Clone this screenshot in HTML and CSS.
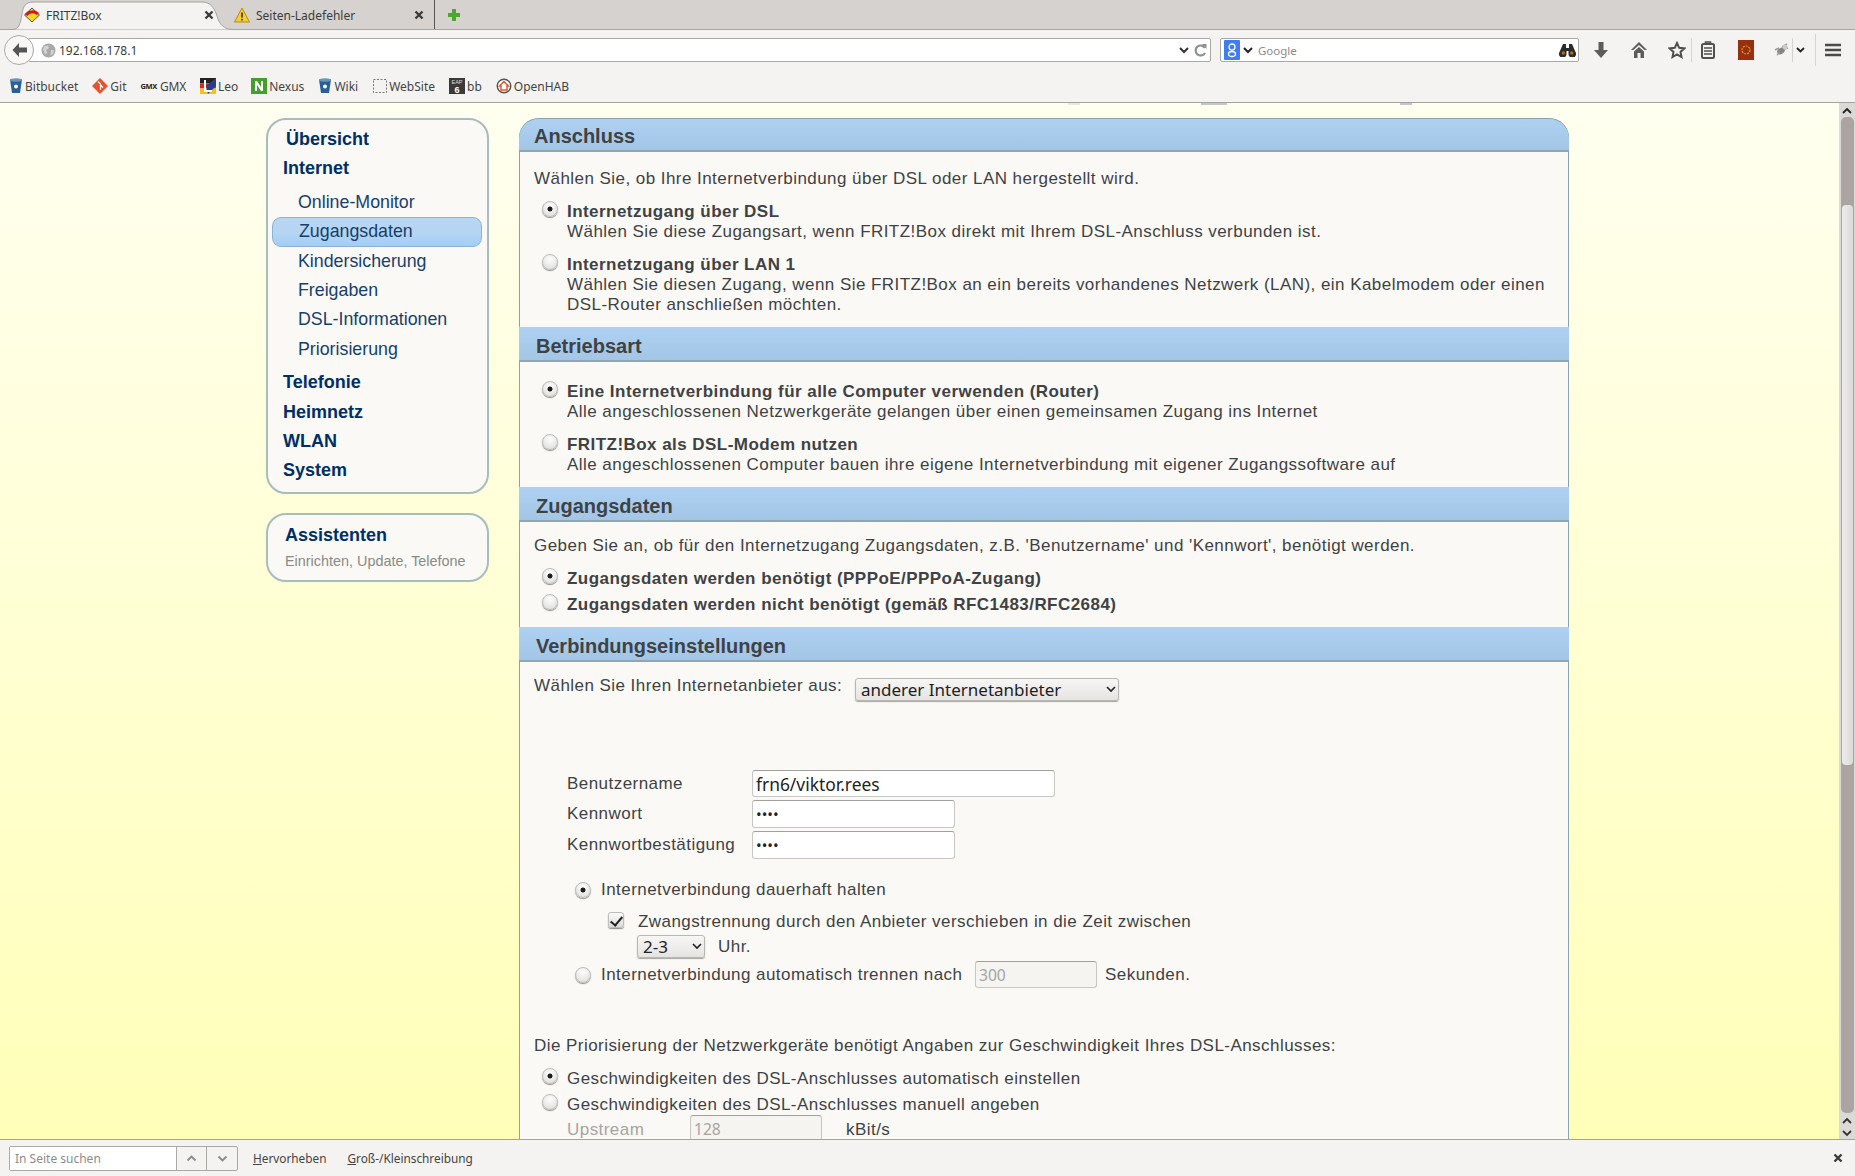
FILE: index.html
```html
<!DOCTYPE html>
<html lang="de">
<head>
    <meta charset="UTF-8">
    <title>FRITZ!Box</title>
    <link rel="stylesheet" href="styles.css">
</head>
<body>
    <header class="browser">
        <div class="tabstrip">
            <div class="tab tab-active">
                <svg class="tab-shape" width="221" height="30" viewBox="0 0 221 30"><path d="M0 29.5C7 29.5 8 25 10 14 11 6 14 2 21 2H190C198 2 202 7 205 16 207 24 212 29.5 221 29.5" fill="#f4f3f1" stroke="#a5a5a1"/></svg>
                <svg class="tab-icon" width="16" height="16" viewBox="0 0 16 16"><path d="M8 1 15.5 8 8 15 .5 8Z" fill="#f8d81e" stroke="#333" stroke-width=".8"/><path d="M2 8C5 4 11 4 14 7" fill="none" stroke="#d8141c" stroke-width="3"/></svg>
                <span class="tab-title">FRITZ!Box</span>
                <svg class="tab-close" width="10" height="10" viewBox="0 0 10 10"><path d="M1.5 1.5 8.5 8.5M8.5 1.5 1.5 8.5" stroke="#3b3b3b" stroke-width="2.4"/></svg>
            </div>
            <div class="tab tab-other">
                <svg class="tab-icon" width="16" height="16" viewBox="0 0 16 16"><path d="M8 1 15.5 15H.5Z" fill="#f6cf2e" stroke="#b88c10"/><path d="M8 5.5V10.5M8 11.8V13.4" stroke="#333" stroke-width="1.6"/></svg>
                <span class="tab-title">Seiten-Ladefehler</span>
                <svg class="tab-close" width="10" height="10" viewBox="0 0 10 10"><path d="M1.5 1.5 8.5 8.5M8.5 1.5 1.5 8.5" stroke="#3b3b3b" stroke-width="2.4"/></svg>
            </div>
            <svg class="new-tab" width="14" height="14" viewBox="0 0 14 14"><path d="M7 1V13M1 7H13" stroke="#4aa82c" stroke-width="4"/></svg>
        </div>

        <div class="navbar">
            <div class="back-button">
                <svg width="18" height="16" viewBox="0 0 18 16"><path d="M8 1 1.5 8 8 15V10.5H16V5.5H8Z" fill="#555"/></svg>
            </div>
            <div class="urlbar">
                <svg class="globe" width="15" height="15" viewBox="0 0 15 15"><circle cx="7.5" cy="7.5" r="7" fill="#a9a9a9"/><path d="M3 3.5 7 2.5 8 5 5 7 6.5 10 4.5 11.5 2 7ZM10 7 13 7 12 11 9.5 12.5Z" fill="#d4d4d4"/></svg>
                <span class="url-text">192.168.178.1</span>
                <svg class="chevron" width="10" height="7" viewBox="0 0 10 7"><path d="M1 1 5 5 9 1" fill="none" stroke="#333" stroke-width="2"/></svg>
                <svg class="reload" width="13" height="14" viewBox="0 0 13 14"><path d="M11 5A5 5 0 1 0 11 10" fill="none" stroke="#8b9197" stroke-width="2.2"/><path d="M8 1H12.5V6Z" fill="#8b9197"/></svg>
            </div>
            <div class="searchbar">
                <svg width="16" height="20" viewBox="0 0 16 20"><rect width="16" height="20" rx="1" fill="#3f7cf6"/><circle cx="8" cy="7" r="3" fill="none" stroke="#fff" stroke-width="1.3"/><ellipse cx="8" cy="14" rx="3.5" ry="2.5" fill="none" stroke="#fff" stroke-width="1.3"/></svg>
                <svg class="chevron" width="10" height="7" viewBox="0 0 10 7"><path d="M1 1 5 5 9 1" fill="none" stroke="#222" stroke-width="2"/></svg>
                <span class="search-text">Google</span>
                <svg class="binoculars" width="17" height="14" viewBox="0 0 17 14"><path d="M4 1H7V5H10V1H13L16.5 9A3.8 3.8 0 1 1 9.5 10.5V8H7.5V10.5A3.8 3.8 0 1 1 .5 9Z" fill="#2b2b2b"/><circle cx="4.3" cy="10" r="1.7" fill="#b5651d"/><circle cx="12.7" cy="10" r="1.7" fill="#b5651d"/></svg>
            </div>
            <div class="toolbar">
                <svg class="tool tool-download" width="16" height="18" viewBox="0 0 16 18"><path d="M5.5 1H10.5V9H15L8 17 1 9H5.5Z" fill="#5c5c5c"/></svg>
                <svg class="tool tool-home" width="18" height="18" viewBox="0 0 18 18"><path d="M9 1 17 9H14.5L9 4 3.5 9H1Z" fill="#5c5c5c"/><path d="M9 6 14 10.5V17H10.5V12H7.5V17H4V10.5Z" fill="#5c5c5c"/></svg>
                <svg class="tool tool-star" width="18" height="18" viewBox="0 0 18 18"><path d="M9 2 11.2 6.8 16.3 7.4 12.5 10.9 13.5 16 9 13.4 4.5 16 5.5 10.9 1.7 7.4 6.8 6.8Z" fill="none" stroke="#4f4f4f" stroke-width="2"/></svg>
                <span class="tool-divider"></span>
                <svg class="tool tool-clip" width="14" height="18" viewBox="0 0 14 18"><rect x="1" y="3" width="12" height="14" rx="1.5" fill="none" stroke="#4f4f4f" stroke-width="2"/><path d="M4.5 3V1H9.5V3M3 7H11M3 10H11M3 13H11" fill="none" stroke="#4f4f4f" stroke-width="1.5"/></svg>
                <svg class="tool tool-red" width="16" height="20" viewBox="0 0 16 20"><rect width="16" height="20" fill="#96300e"/><circle cx="8" cy="10" r="4" fill="none" stroke="#e39a2e" stroke-width="1.2" stroke-dasharray="2 1"/></svg>
                <svg class="tool tool-bug" width="16" height="16" viewBox="0 0 16 16"><ellipse cx="8" cy="9" rx="4" ry="3" fill="#555" opacity=".7" transform="rotate(-30 8 9)"/><path d="M9 5 14 2M11 7 15 6M2 8 6 6M4 13 7 10" stroke="#999" stroke-width="1.5"/><circle cx="12" cy="5" r="2.5" fill="#ccc"/></svg>
                <span class="tool-divider tool-divider-small"></span>
                <svg class="tool tool-more" width="9" height="6" viewBox="0 0 9 6"><path d="M1 1 4.5 4.5 8 1" fill="none" stroke="#222" stroke-width="1.8"/></svg>
                <span class="tool-divider tool-divider-tall"></span>
                <svg class="tool tool-menu" width="16" height="14" viewBox="0 0 16 14"><path d="M0 2H16M0 7H16M0 12H16" stroke="#4a4a4a" stroke-width="2.6"/></svg>
            </div>
        </div>

        <div class="bookmarks">
            <a class="bookmark bm-bitbucket"><svg width="14" height="16" viewBox="0 0 14 16"><path d="M1 1.5H13L11 15H3Z" fill="#2a5f96"/><ellipse cx="7" cy="2" rx="6" ry="1.8" fill="#6d93b8"/><circle cx="7" cy="8.5" r="2" fill="#fff"/></svg>Bitbucket</a>
            <a class="bookmark bm-git"><svg width="16" height="16" viewBox="0 0 16 16"><path d="M8 0 16 8 8 16 0 8Z" fill="#e9502f"/><path d="M6 3.5 8.5 6V12M8.5 7 11 9.5" fill="none" stroke="#fff" stroke-width="1.2"/></svg>Git</a>
            <a class="bookmark bm-gmx"><span class="gmx-logo">GMX</span>GMX</a>
            <a class="bookmark bm-leo"><svg width="16" height="16" viewBox="0 0 16 16"><rect width="16" height="5.5" fill="#222"/><rect y="5.5" width="16" height="5" fill="#d8282a"/><rect y="10.5" width="16" height="5.5" fill="#f1c21f"/><path d="M8 16 16 8V0L6 8Z" fill="#28408c"/><path d="M5 2V13H12" fill="none" stroke="#fff" stroke-width="2"/></svg>Leo</a>
            <a class="bookmark bm-nexus"><svg width="16" height="16" viewBox="0 0 16 16"><rect width="16" height="16" fill="#43a02b"/><path d="M4 13V3H6L10 9V3H12V13H10L6 7V13Z" fill="#fff"/></svg>Nexus</a>
            <a class="bookmark bm-wiki"><svg width="14" height="16" viewBox="0 0 14 16"><path d="M1 1.5H13L11 15H3Z" fill="#2a5f96"/><ellipse cx="7" cy="2" rx="6" ry="1.8" fill="#6d93b8"/><circle cx="7" cy="8.5" r="2" fill="#fff"/></svg>Wiki</a>
            <a class="bookmark bm-website"><svg width="14" height="14" viewBox="0 0 14 14"><rect x=".5" y=".5" width="13" height="13" fill="none" stroke="#777" stroke-dasharray="2 1.5"/></svg>WebSite</a>
            <a class="bookmark bm-bb"><svg width="16" height="16" viewBox="0 0 16 16"><rect width="16" height="16" fill="#3a3a3a"/><text x="8" y="6" font-size="5.5" fill="#ddd" text-anchor="middle" font-family="Liberation Sans">EAP</text><text x="8" y="15" font-size="9" font-weight="bold" fill="#fff" text-anchor="middle" font-family="Liberation Sans">6</text></svg>bb</a>
            <a class="bookmark bm-openhab"><svg width="16" height="16" viewBox="0 0 16 16"><circle cx="8" cy="8" r="6.8" fill="#fff" stroke="#555" stroke-width="1.4"/><path d="M8 3.5 12.5 8H11V12H5V8H3.5Z" fill="none" stroke="#e8552a" stroke-width="1.5"/></svg>OpenHAB</a>
        </div>
    </header>

    <div class="viewport">
        <div class="page">
            <span class="cut-mark cut-one"></span>
            <span class="cut-mark cut-two"></span>
            <span class="cut-mark cut-three"></span>

            <aside class="sidebar">
                <ul class="panel menu">
                    <li class="menu-overview">Übersicht</li>
                    <li class="menu-main menu-open">Internet</li>
                    <li class="menu-sub">Online-Monitor</li>
                    <li class="menu-sub menu-current">Zugangsdaten</li>
                    <li class="menu-sub">Kindersicherung</li>
                    <li class="menu-sub">Freigaben</li>
                    <li class="menu-sub">DSL-Informationen</li>
                    <li class="menu-sub menu-last">Priorisierung</li>
                    <li class="menu-main">Telefonie</li>
                    <li class="menu-main">Heimnetz</li>
                    <li class="menu-main">WLAN</li>
                    <li class="menu-main">System</li>
                </ul>
                <div class="panel wizard">
                    <div class="wizard-title">Assistenten</div>
                    <div class="wizard-text">Einrichten, Update, Telefone</div>
                </div>
            </aside>

            <main class="content">
                <h2 class="section-head section-first">Anschluss</h2>
                <section class="section section-anschluss">
                    <p class="text">Wählen Sie, ob Ihre Internetverbindung über DSL oder LAN hergestellt wird.</p>
                    <div class="choice choice-a">
                        <input type="radio" name="anschluss" checked>
                        <div><strong>Internetzugang über DSL</strong><br>Wählen Sie diese Zugangsart, wenn FRITZ!Box direkt mit Ihrem DSL-Anschluss verbunden ist.</div>
                    </div>
                    <div class="choice choice-a">
                        <input type="radio" name="anschluss">
                        <div><strong>Internetzugang über LAN 1</strong><br>Wählen Sie diesen Zugang, wenn Sie FRITZ!Box an ein bereits vorhandenes Netzwerk (LAN), ein Kabelmodem oder einen<br>DSL-Router anschließen möchten.</div>
                    </div>
                </section>

                <h2 class="section-head">Betriebsart</h2>
                <section class="section section-betrieb">
                    <div class="choice">
                        <input type="radio" name="betrieb" checked>
                        <div><strong>Eine Internetverbindung für alle Computer verwenden (Router)</strong><br>Alle angeschlossenen Netzwerkgeräte gelangen über einen gemeinsamen Zugang ins Internet</div>
                    </div>
                    <div class="choice choice-a">
                        <input type="radio" name="betrieb">
                        <div><strong>FRITZ!Box als DSL-Modem nutzen</strong><br>Alle angeschlossenen Computer bauen ihre eigene Internetverbindung mit eigener Zugangssoftware auf</div>
                    </div>
                </section>

                <h2 class="section-head">Zugangsdaten</h2>
                <section class="section section-zugang">
                    <p class="text">Geben Sie an, ob für den Internetzugang Zugangsdaten, z.B. 'Benutzername' und 'Kennwort', benötigt werden.</p>
                    <div class="choice choice-a">
                        <input type="radio" name="zugang" checked>
                        <strong>Zugangsdaten werden benötigt (PPPoE/PPPoA-Zugang)</strong>
                    </div>
                    <div class="choice choice-c">
                        <input type="radio" name="zugang">
                        <strong>Zugangsdaten werden nicht benötigt (gemäß RFC1483/RFC2684)</strong>
                    </div>
                </section>

                <h2 class="section-head">Verbindungseinstellungen</h2>
                <section class="section section-verbindung">
                    <div class="provider">
                        <span class="provider-label">Wählen Sie Ihren Internetanbieter aus:</span>
                        <select class="select select-provider"><option>anderer Internetanbieter</option></select>
                    </div>

                    <div class="login">
                        <label>Benutzername</label>
                        <input class="field field-long" type="text" value="frn6/viktor.rees">
                        <label>Kennwort</label>
                        <input class="field field-short" type="password" value="abcd">
                        <label>Kennwortbestätigung</label>
                        <input class="field field-short" type="password" value="abcd">
                    </div>

                    <div class="hold hold-first">
                        <input type="radio" name="halten" checked>
                        <span>Internetverbindung dauerhaft halten</span>
                    </div>
                    <div class="hold-check">
                        <input type="checkbox" checked>
                        <span>Zwangstrennung durch den Anbieter verschieben in die Zeit zwischen</span>
                    </div>
                    <div class="hold-time">
                        <select class="select select-time"><option>2-3</option></select>
                        <span>Uhr.</span>
                    </div>
                    <div class="hold hold-last">
                        <input type="radio" name="halten">
                        <span class="hold-label">Internetverbindung automatisch trennen nach</span>
                        <input class="field field-seconds" type="text" value="300" disabled>
                        <span>Sekunden.</span>
                    </div>

                    <p class="text text-speed">Die Priorisierung der Netzwerkgeräte benötigt Angaben zur Geschwindigkeit Ihres DSL-Anschlusses:</p>
                    <div class="choice choice-a">
                        <input type="radio" name="speed" checked>
                        <span>Geschwindigkeiten des DSL-Anschlusses automatisch einstellen</span>
                    </div>
                    <div class="choice choice-d">
                        <input type="radio" name="speed">
                        <span>Geschwindigkeiten des DSL-Anschlusses manuell angeben</span>
                    </div>
                    <div class="upstream">
                        <span class="upstream-label">Upstream</span>
                        <input class="field field-upstream" type="text" value="128" disabled>
                        <span class="upstream-unit">kBit/s</span>
                    </div>
                </section>
            </main>
        </div>

        <div class="scrollbar">
            <svg class="scroll-arrow" width="12" height="8" viewBox="0 0 12 8"><path d="M2 6 6 2 10 6" fill="none" stroke="#222" stroke-width="1.8"/></svg>
            <div class="scroll-track"><div class="scroll-thumb"></div></div>
            <svg class="scroll-arrow" width="12" height="8" viewBox="0 0 12 8"><path d="M2 6 6 2 10 6" fill="none" stroke="#333" stroke-width="1.8"/></svg>
            <svg class="scroll-arrow" width="12" height="8" viewBox="0 0 12 8"><path d="M2 2 6 6 10 2" fill="none" stroke="#333" stroke-width="1.8"/></svg>
        </div>
    </div>

    <footer class="findbar">
        <div class="find-box">
            <span class="find-input">In Seite suchen</span>
            <span class="find-step"><svg width="11" height="7" viewBox="0 0 11 7"><path d="M1.5 5.5 5.5 1.5 9.5 5.5" fill="none" stroke="#8a8a8a" stroke-width="1.8"/></svg></span>
            <span class="find-step"><svg width="11" height="7" viewBox="0 0 11 7"><path d="M1.5 1.5 5.5 5.5 9.5 1.5" fill="none" stroke="#8a8a8a" stroke-width="1.8"/></svg></span>
        </div>
        <span class="find-option find-highlight"><u>H</u>ervorheben</span>
        <span class="find-option"><u>G</u>roß-/Kleinschreibung</span>
        <svg class="find-close" width="10" height="10" viewBox="0 0 10 10"><path d="M1.5 1.5 8.5 8.5M8.5 1.5 1.5 8.5" stroke="#3b3b3b" stroke-width="2.4"/></svg>
    </footer>
</body>
</html>
```

FILE: styles.css
```css
* {
    box-sizing: border-box;
}

html, body {
    height: 100%;
}

body {
    margin: 0;
    display: flex;
    flex-direction: column;
    overflow: hidden;
    background-color: #f4f3f1;
    font-family: "Liberation Sans", Arial, sans-serif;
    color: #3f4245;
}

/* browser chrome */
.browser {
    flex: none;
    font-family: "Noto Sans", sans-serif;
    font-size: 12px;
    color: #3c3c3c;
    border-bottom: 1px solid #a3a39f;
}

.tabstrip {
    height: 30px;
    display: flex;
    align-items: center;
    padding-left: 12px;
    background-color: #d5d2cf;
    border-bottom: 1px solid #a5a5a1;
}

.tab {
    position: relative;
    height: 29px;
    display: flex;
    align-items: center;
    padding-top: 1px;
}

.tab-active {
    width: 221px;
    padding: 1px 19px 0 12px;
}

.tab-other {
    width: 202px;
    padding: 1px 10px 0 1px;
    border-right: 1px solid #57534f;
}

.tab-shape {
    position: absolute;
    left: 0;
    top: 0;
}

.tab-icon,
.tab-title,
.tab-close {
    position: relative;
}

.tab-title {
    margin-left: 6px;
    flex: 1;
}

.new-tab {
    margin-left: 12px;
}

.navbar {
    height: 36px;
    display: flex;
    align-items: center;
    padding: 4px 0 0 4px;
}

.back-button {
    position: relative;
    z-index: 1;
    width: 30px;
    height: 30px;
    flex: none;
    display: flex;
    align-items: center;
    justify-content: center;
    padding-left: 2px;
    border: 1px solid #a9a9a5;
    border-radius: 50%;
    background-color: #f8f7f6;
}

.urlbar,
.searchbar {
    height: 24px;
    display: flex;
    align-items: center;
    background-color: #fff;
    border: 1px solid #a9a9a5;
    border-radius: 2px;
}

.urlbar {
    width: 1183px;
    margin-left: -6px;
    padding: 0 3px 0 12px;
}

.url-text {
    margin-left: 3px;
    flex: 1;
    font-size: 12px;
}

.reload {
    margin-left: 5px;
}

.searchbar {
    width: 359px;
    margin-left: 9px;
    padding: 0 2px 0 3px;
}

.searchbar .chevron {
    margin-left: 3px;
}

.search-text {
    flex: 1;
    margin-left: 5px;
    color: #8c8c8c;
    font-size: 11.5px;
}

.toolbar {
    display: flex;
    align-items: center;
    flex: 1;
    height: 32px;
}

.tool {
    flex: none;
}

.tool-download {
    margin-left: 14px;
}

.tool-home {
    margin-left: 21px;
}

.tool-star {
    margin-left: 20px;
}

.tool-divider {
    width: 1px;
    height: 24px;
    margin-left: 5px;
    background-color: #d5d4d1;
}

.tool-divider-small {
    margin-left: 3px;
}

.tool-divider-tall {
    height: 32px;
    margin-left: 10px;
}

.tool-clip {
    margin-left: 9px;
}

.tool-red {
    margin-left: 23px;
}

.tool-bug {
    margin-left: 19px;
}

.tool-more {
    margin-left: 3px;
}

.tool-menu {
    margin-left: 9px;
}

.bookmarks {
    height: 36px;
    display: flex;
    align-items: center;
    padding: 4px 0 0 9px;
    gap: 14px;
}

.bookmark {
    display: flex;
    align-items: center;
    gap: 2px;
    font-size: 12px;
    color: #444;
}

.gmx-logo {
    font-size: 7.5px;
    font-weight: bold;
    color: #222;
    margin-right: 1px;
}

.bm-gmx {
    letter-spacing: -.3px;
}

.bm-leo {
    margin-right: -1px;
}

.bm-wiki {
    margin-right: 1px;
}

/* page */
.viewport {
    flex: 1;
    min-height: 0;
    display: flex;
}

.page {
    position: relative;
    flex: 1;
    display: flex;
    align-items: flex-start;
    gap: 30px;
    padding: 15px 0 0 266px;
    overflow: hidden;
    background: linear-gradient(#fffff0, #ffffb8);
}

.cut-mark {
    position: absolute;
    top: 0;
    height: 2px;
    background-color: #c6c6c2;
}

.cut-one {
    left: 1068px;
    width: 12px;
    background-color: #e8e8dc;
}

.cut-two {
    left: 1201px;
    width: 26px;
}

.cut-three {
    left: 1400px;
    width: 12px;
}

.sidebar {
    width: 223px;
    flex: none;
}

.panel {
    background-color: #faf9f6;
    border: 2px solid #a8bcbc;
    border-radius: 20px;
}

.menu {
    list-style: none;
    margin: 0;
    padding: 5px 5px 6px 4px;
    color: #16406f;
    font-size: 17.8px;
    line-height: 29.4px;
}

.menu-overview,
.menu-main {
    color: #002f66;
    font-size: 18px;
    font-weight: bold;
}

.menu-overview {
    padding-left: 14px;
}

.menu-main {
    padding-left: 11px;
}

.menu-open {
    margin-bottom: 4px;
}

.menu-sub {
    padding-left: 26px;
}

.menu-last {
    margin-bottom: 4px;
}

.menu-current {
    color: #163e6b;
    border: 1px solid #8db3d4;
    border-radius: 9px;
    line-height: 27.4px;
    background: linear-gradient(#b9d6f2, #b4d5f3 55%, #a3cdf6);
}

.wizard {
    height: 69px;
    margin-top: 19px;
    padding: 9px 0 0 17px;
}

.wizard-title {
    color: #002f66;
    font-size: 18px;
    font-weight: bold;
    line-height: 22px;
}

.wizard-text {
    margin-top: 5px;
    color: #8a8a85;
    font-size: 14.4px;
    line-height: 20px;
}

.content {
    width: 1050px;
    flex: none;
    background-color: #faf9f6;
    border-left: 1px solid #8ba3a6;
    border-right: 1px solid #8ba3a6;
    border-radius: 20px 20px 0 0;
    font-size: 17px;
    line-height: 20px;
    letter-spacing: .45px;
}

.section-head {
    height: 35px;
    margin: 0 -1px;
    padding-left: 17px;
    border-bottom: 2px solid #8fa7b3;
    background: linear-gradient(#aed1f3, #a3c6e6);
    color: #3f4245;
    font-size: 20px;
    font-weight: bold;
    line-height: 38px;
    letter-spacing: 0;
}

.section-first {
    height: 34px;
    padding-left: 15px;
    line-height: 35px;
    border-top: 1px solid #8ba3a6;
    border-radius: 20px 20px 0 0;
}

.section-anschluss {
    padding: 17px 14px 12px;
}

.section-betrieb {
    padding: 20px 14px 12px;
}

.section-zugang {
    padding: 14px 14px 12px;
}

.section-verbindung {
    padding: 14px 14px 13px;
}

.text {
    margin: 0;
}

.choice {
    display: flex;
    margin-left: 8px;
}

.choice-a {
    margin-top: 13px;
}

.choice-c {
    margin-top: 6px;
}

.choice-d {
    margin-top: 6px;
}

input[type="radio"],
input[type="checkbox"] {
    appearance: none;
    flex: none;
    width: 16px;
    height: 16px;
    margin: 0 10px 0 0;
    border: 1px solid #bcbcb8;
    border-radius: 50%;
    background: radial-gradient(circle at 50% 30%, #fdfdfd, #e4e3e0 75%);
    box-shadow: 0 1px 1px #8d8d8a;
}

input[type="radio"]:checked {
    background: radial-gradient(circle, #1e1e1e 0 2.2px, transparent 2.8px), radial-gradient(circle at 50% 30%, #fdfdfd, #e4e3e0 75%);
}

.choice input[type="radio"] {
    margin-top: -1px;
    margin-right: 9px;
}

input[type="checkbox"] {
    border-radius: 3px;
    margin-right: 14px;
}

input[type="checkbox"]:checked {
    background: linear-gradient(#fbfbfa, #dcdbd8);
    position: relative;
}

input[type="checkbox"]:checked::after {
    content: "";
    position: absolute;
    left: 3.5px;
    top: .5px;
    width: 5px;
    height: 10px;
    border: solid #222;
    border-width: 0 2px 2px 0;
    transform: rotate(40deg);
}

.provider {
    display: flex;
    align-items: flex-start;
}

.provider-label {
    width: 321px;
    flex: none;
}

.select {
    appearance: none;
    border: 0;
    border-radius: 3px;
    padding: 0 0 0 6px;
    color: #222;
    font-family: "Noto Sans", sans-serif;
    font-size: 17px;
    background: url("data:image/svg+xml,%3Csvg xmlns='http://www.w3.org/2000/svg' width='10' height='7'%3E%3Cpath d='M1 1l4 4 4-4' fill='none' stroke='%23222' stroke-width='1.6'/%3E%3C/svg%3E") no-repeat right 3px center, linear-gradient(#f8f7f6, #e4e3e0);
    box-shadow: inset 0 0 0 1px #b7b7b3, 0 1px 1px #a5a5a1;
}

.select-provider {
    width: 264px;
    height: 23px;
    margin-top: 2px;
}

.select-time {
    width: 68px;
    height: 23px;
    margin-right: 13px;
}

.login {
    display: grid;
    grid-template-columns: 185px 1fr;
    row-gap: 3px;
    align-items: center;
    margin: 69px 0 0 33px;
}

.field {
    height: 27px;
    padding: 0 3px;
    border: 1px solid #c6c6c2;
    border-top-color: #9f9f9b;
    border-radius: 3px;
    background-color: #fff;
    color: #222;
    font-family: "Noto Sans", sans-serif;
    font-size: 15.6px;
}

.field-long {
    width: 303px;
    font-size: 17.4px;
}

.field-short {
    width: 203px;
    height: 28px;
    font-size: 15px;
}

.field:disabled {
    background-color: #f5f4f1;
    color: #a5a5a1;
}

.hold {
    display: flex;
    margin-left: 41px;
}

.hold-first {
    margin-top: 21px;
}

.hold-first input[type="radio"] {
    margin-top: 2px;
}

.hold-check {
    display: flex;
    margin: 12px 0 0 74px;
}

.hold-time {
    display: flex;
    align-items: center;
    margin: 3px 0 0 103px;
}

.hold-last {
    align-items: center;
    margin-top: 3px;
}

.hold-label {
    width: 374px;
    flex: none;
}

.field-seconds {
    width: 122px;
    margin-right: 8px;
}

.text-speed {
    margin-top: 48px;
}

.upstream {
    display: flex;
    align-items: flex-start;
    margin: 0 0 0 33px;
    color: #a5a5a1;
}

.upstream-label {
    width: 123px;
    margin-top: 5px;
    flex: none;
}

.field-upstream {
    width: 132px;
    margin-right: 24px;
}

.upstream-unit {
    margin-top: 5px;
    color: #3f4245;
}

/* scrollbar */
.scrollbar {
    width: 16px;
    flex: none;
    display: flex;
    flex-direction: column;
    align-items: center;
    padding-top: 2px;
    background-color: #dcdad7;
}

.scroll-arrow {
    flex: none;
    margin: 2px 0;
}

.scroll-track {
    flex: 1;
    width: 13px;
    margin-bottom: 2px;
    padding-top: 88px;
    border-radius: 5px;
    background-color: #aba4a1;
}

.scroll-thumb {
    height: 560px;
    margin: 0 1px;
    border-radius: 4px;
    background: linear-gradient(90deg, #eeecea, #dddbd8);
}

/* find bar */
.findbar {
    flex: none;
    height: 37px;
    display: flex;
    align-items: center;
    padding: 0 12px 0 9px;
    border-top: 1px solid #a3a39f;
    font-family: "Noto Sans", sans-serif;
    font-size: 11.8px;
    color: #444;
}

.find-box {
    width: 229px;
    height: 25px;
    display: flex;
    border: 1px solid #a9a9a5;
    border-radius: 2px;
}

.find-input {
    width: 167px;
    padding-left: 5px;
    background-color: #fff;
    color: #8c8c8c;
    font-size: 12px;
    line-height: 23px;
}

.find-step {
    width: 31px;
    display: flex;
    align-items: center;
    justify-content: center;
    border-left: 1px solid #a9a9a5;
}

.find-option {
    margin-left: 15px;
}

.find-highlight {
    margin-right: 6px;
}

.find-close {
    margin-left: auto;
}
```
